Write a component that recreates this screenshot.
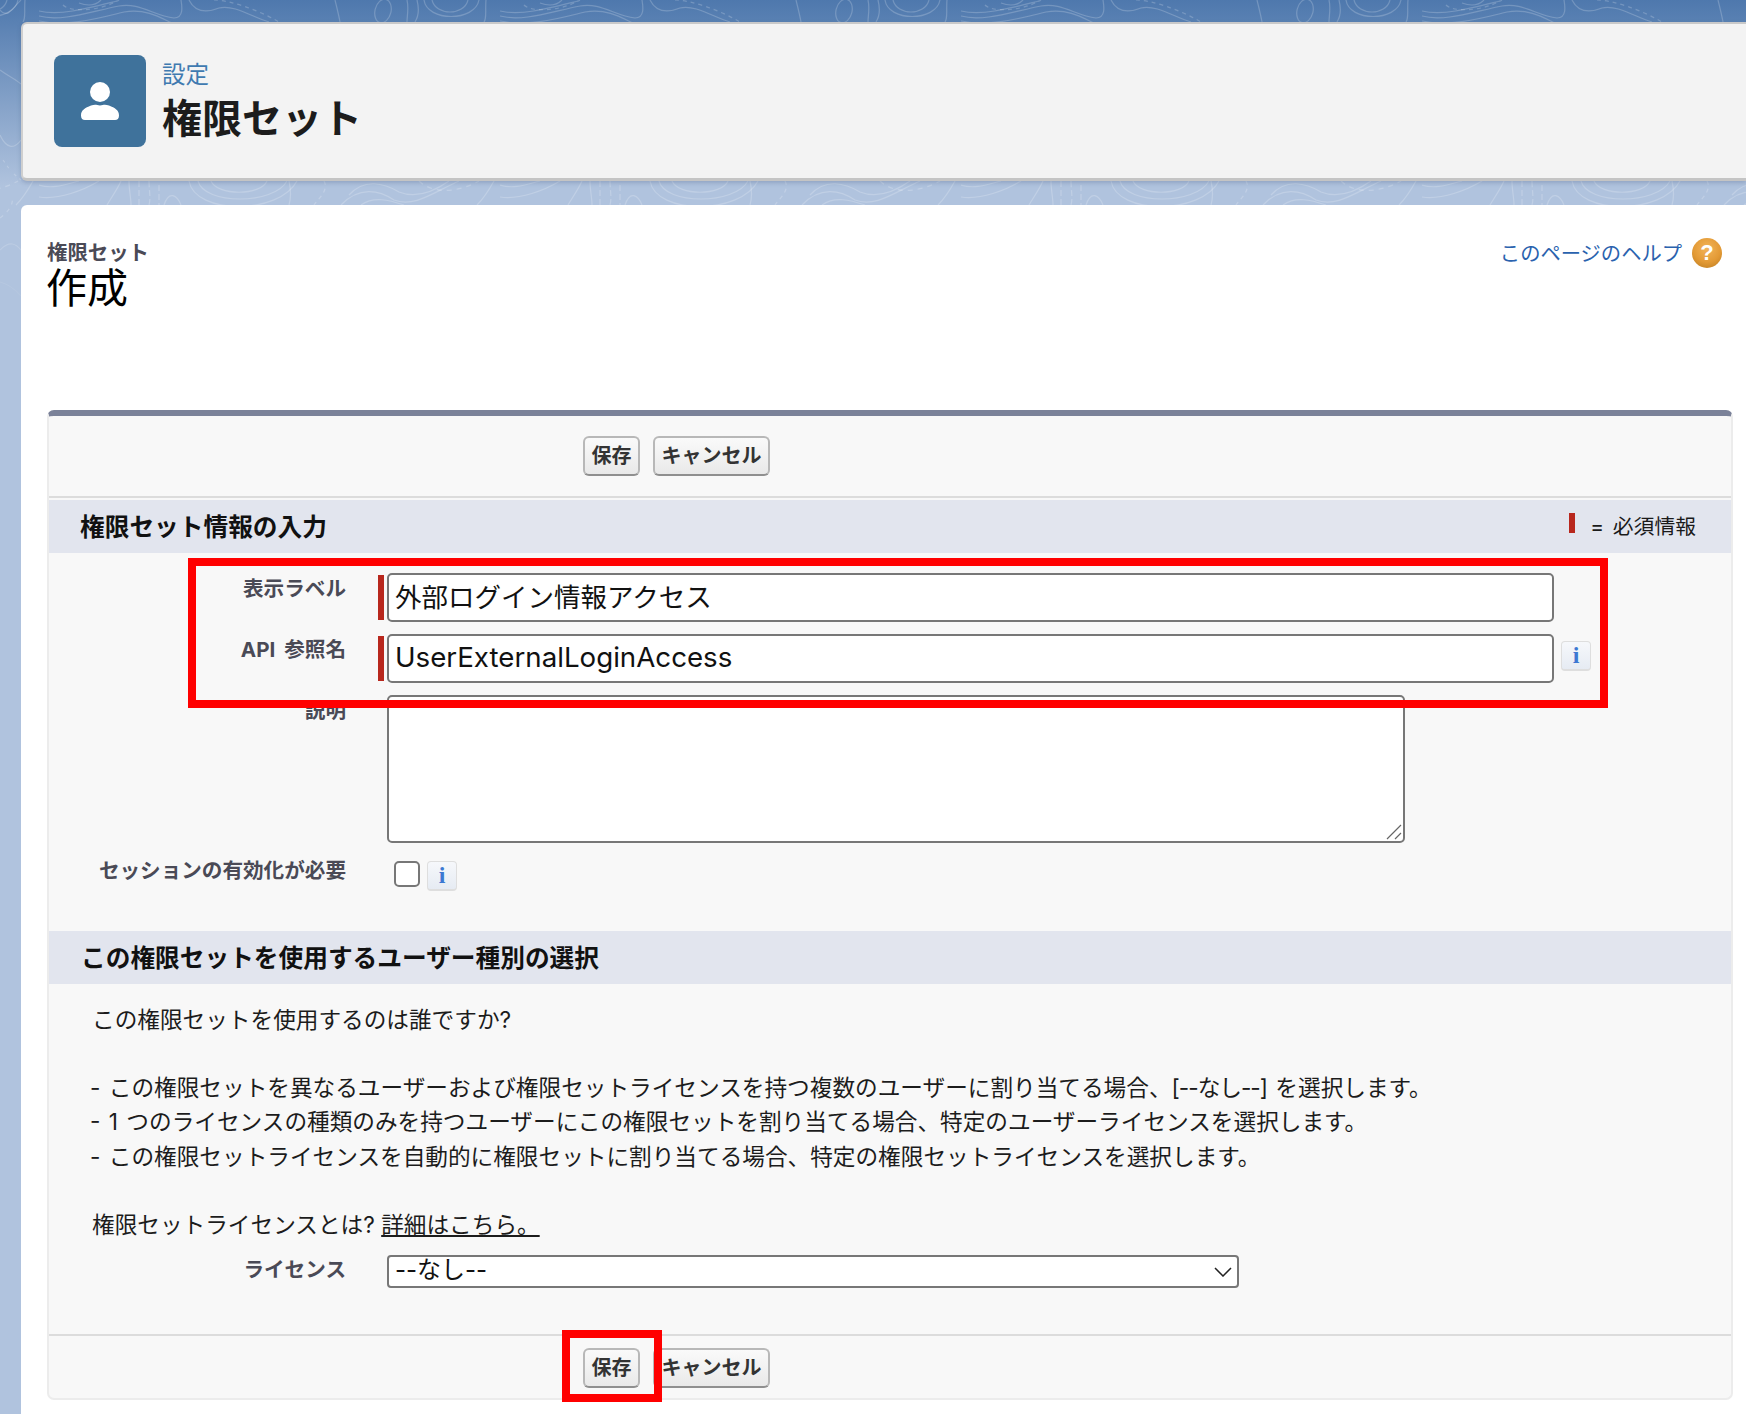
<script>
</script>

<div class="page">
  <svg class="bg" width="1746" height="320" aria-hidden="true">
    <defs>
      <pattern id="topo" width="461" height="320" patternUnits="userSpaceOnUse" patternTransform="translate(500 0)">
        <g fill="none" stroke="#fff" stroke-opacity=".2" stroke-width="1.2">
          <path d="M0 16C22 22 50 12 80 6C100 2 115 16 135 18C145 18 143 6 142 0"/>
          <path d="M0 11C22 16 50 8 78 1"/>
          <path d="M0 21C30 27 60 18 85 12C110 8 125 20 135 24"/>
          <path d="M150 0C155 10 165 14 180 8C195 4 215 18 230 22"/>
          <path d="M175 0C190 0 220 10 240 22" stroke-dasharray="4 4"/>
          <path d="M24 5C30 12 60 12 80 0" stroke-dasharray="4 4"/>
          <path d="M40 3C48 6 56 6 62 0"/>
          <ellipse cx="344" cy="11" rx="8" ry="12" transform="rotate(14 344 11)"/>
          <path d="M296 0C298 8 300 16 301 22"/>
          <path d="M368 0C370 8 368 16 368 22"/>
          <path d="M378 0C380 8 380 16 376 22"/>
          <path d="M393 0C397 16 425 16 429 0"/>
          <path d="M385 0C388 22 436 22 440 0"/>
          <path d="M447 0C446 10 448 18 445 22"/>
          <path d="M159 181C165 205 235 205 248 181"/>
          <path d="M150 181C156 215 240 215 258 181"/>
          <path d="M172 181C178 196 222 196 228 181"/>
          <path d="M82 181C78 190 72 198 68 205"/>
          <path d="M90 181C90 190 92 198 92 205"/>
          <path d="M100 181V205M110 181C110 190 112 198 110 205M120 185V205" stroke-dasharray="6 3"/>
          <path d="M125 205C130 190 138 195 142 205"/>
          <path d="M0 185C15 190 30 183 40 181"/>
          <path d="M0 197C20 200 45 190 60 181"/>
          <path d="M302 205C320 186 340 190 355 200C375 208 395 192 420 181"/>
          <path d="M322 205C335 196 350 200 365 205"/>
          <path d="M310 195C325 178 345 183 360 192C380 200 400 188 410 181"/>
          <path d="M380 181C395 195 420 192 440 181" stroke-dasharray="5 5"/>
          <path d="M285 181C290 190 280 198 275 205" stroke-dasharray="4 4"/>
          <path d="M250 181C252 190 252 198 250 205"/>
          <path d="M455 181C450 190 445 198 438 205"/>
        </g>
      </pattern>
      <linearGradient id="fade" x1="0" y1="0" x2="0" y2="1">
        <stop offset="0" stop-color="#fff"/>
        <stop offset=".7" stop-color="#fff"/>
        <stop offset="1" stop-color="#000"/>
      </linearGradient>
      <mask id="fadeMask"><rect width="1746" height="320" fill="url(#fade)"/></mask>
    </defs>
    <rect width="1746" height="320" fill="url(#topo)"/>
    <g fill="none" stroke="#fff" stroke-opacity=".2" stroke-width="1.2" mask="url(#fadeMask)">
      <path d="M0 10C8 20 14 6 21 0"/>
      <path d="M0 70C8 76 14 78 21 84"/>
      <path d="M0 135C6 148 14 150 21 140"/>
      <path d="M3 160L10 170M14 174L21 180" stroke-dasharray="3 4"/>
      <path d="M0 218C8 212 14 205 12 196" stroke-dasharray="4 5"/>
      <path d="M0 250C10 240 16 244 21 250"/>
      <path d="M0 282C8 284 14 288 21 296"/>
    </g>
  </svg>

  <header class="top">
    <div class="tile">
      <svg width="92" height="92" viewBox="0 0 92 92" aria-hidden="true">
        <circle cx="46" cy="37" r="10" fill="#fff"/>
        <path d="M27 60.5C27 55 31 53 37 50.500C40 49.500 42 49.500 46 50.500C50 49.500 52 49.500 55 50.500C61 53 65 55 65 60.500C65 63.500 63.500 65 61 65H31C28.500 65 27 63.500 27 60.500Z" fill="#fff"/>
      </svg>
    </div>
    <div class="titles">
      <div class="crumb">設定</div>
      <h1>権限セット</h1>
    </div>
  </header>

  <main class="card">
    <div class="head">
      <div class="names">
        <div class="kind">権限セット</div>
        <h2>作成</h2>
      </div>
      <div class="help">
        <span class="helptext">このページのヘルプ</span>
        <span class="helpicon">?</span>
      </div>
    </div>

    <section class="panel">
      <div class="buttons top-buttons">
        <button class="save">保存</button>
        <button>キャンセル</button>
      </div>

      <div class="bar first-bar">
        <h3>権限セット情報の入力</h3>
        <div class="legend"><i class="req legend-req"></i><span>= 必須情報</span></div>
      </div>

      <div class="fields">
        <div class="row">
          <div class="label">表示ラベル</div>
          <div class="field"><i class="req"></i><input class="text" value="外部ログイン情報アクセス" /></div>
        </div>
        <div class="row">
          <div class="label">API 参照名</div>
          <div class="field"><i class="req"></i><input class="text latin" value="UserExternalLoginAccess" /><span class="info api-info">i</span></div>
        </div>
        <div class="row">
          <div class="label">説明</div>
          <div class="field plain">
            <div class="areawrap">
              <textarea></textarea>
              <svg class="grip" width="16" height="16" viewBox="0 0 16 16" aria-hidden="true"><path d="M1 15L15 1M9 15l6-6" fill="none" stroke="#666" stroke-width="1.200"/></svg>
            </div>
          </div>
        </div>
        <div class="row">
          <div class="label">セッションの有効化が必要</div>
          <div class="field check"><input type="checkbox" /><span class="info">i</span></div>
        </div>
      </div>

      <div class="bar second-bar">
        <h3>この権限セットを使用するユーザー種別の選択</h3>
      </div>

      <div class="copy">
        <p class="lead">この権限セットを使用するのは誰ですか?</p>
        <ul>
          <li>- この権限セットを異なるユーザーおよび権限セットライセンスを持つ複数のユーザーに割り当てる場合、<span class="tight">[--なし--]</span> を選択します。</li>
          <li>- 1 つのライセンスの種類のみを持つユーザーにこの権限セットを割り当てる場合、特定のユーザーライセンスを選択します。</li>
          <li>- この権限セットライセンスを自動的に権限セットに割り当てる場合、特定の権限セットライセンスを選択します。</li>
        </ul>
        <p>権限セットライセンスとは? <u>詳細はこちら。</u></p>
      </div>

      <div class="row license">
        <div class="label">ライセンス</div>
        <div class="field plain">
          <div class="selectwrap">
            <select><option>--なし--</option></select>
            <svg class="chev" width="18" height="10" viewBox="0 0 18 10" aria-hidden="true"><path d="M1 1l8 8 8-8" fill="none" stroke="#222" stroke-width="1.500"/></svg>
          </div>
        </div>
      </div>

      <div class="buttons bottom-buttons">
        <button class="save">保存</button>
        <button>キャンセル</button>
      </div>
    </section>
  </main>

  <div class="mark mark-fields"></div>
  <div class="mark mark-save"></div>
</div>

<style>
  :global(body) {
    margin: 0;
    background: #fff;
  }
  .page {
    position: relative;
    width: 1746px;
    height: 1414px;
    overflow: hidden;
    background: linear-gradient(180deg, #4e78ad 0, #b0c3de 186px, #b0c3de 100%);
    font-family: Inter, "Noto Sans CJK JP", sans-serif;
    color: #1a1a1a;
  }
  .bg {
    position: absolute;
    left: 0;
    top: 0;
  }
  .top {
    position: relative;
    display: flex;
    align-items: center;
    gap: 16px;
    height: 154px;
    margin: 22px 0 0 21px;
    padding-left: 31px;
    background: #f3f3f3;
    border-top: 2px solid #c9c9c9;
    border-bottom: 3px solid #c4c4c4;
    border-left: 2px solid #cfcfcf;
    border-radius: 6px 0 0 6px;
    box-shadow: 0 2px 4px rgba(60, 80, 120, .25);
    box-sizing: content-box;
  }
  .tile {
    width: 92px;
    height: 92px;
    border-radius: 8px;
    background: #3f729b;
  }
  .tile svg { display: block; }
  .crumb {
    font-size: 23.500px;
    line-height: 30px;
    color: #3f7ab0;
  }
  h1 {
    margin: 5px 0 0;
    font-size: 40px;
    line-height: 48px;
    font-weight: 700;
    color: #1c1c1c;
  }
  .card {
    position: relative;
    height: 1209px;
    margin: 24px 0 0 21px;
    padding: 0 13px 0 26px;
    background: #fff;
    border-radius: 6px 0 0 0;
    box-sizing: border-box;
  }
  .head {
    display: flex;
    justify-content: space-between;
    height: 205px;
  }
  .kind {
    margin-top: 34px;
    font-size: 20.400px;
    line-height: 28px;
    font-weight: 700;
    color: #4a4a56;
  }
  h2 {
    margin: -1px 0 0 -1px;
    font-size: 41px;
    line-height: 45px;
    font-weight: 400;
    color: #000;
  }
  .help {
    display: flex;
    align-items: flex-start;
    gap: 10px;
    margin-top: 33px;
    margin-right: 11px;
  }
  .helptext {
    margin-top: 1px;
    font-size: 20.300px;
    line-height: 30px;
    color: #2a62ae;
  }
  .helpicon {
    width: 30px;
    height: 30px;
    border-radius: 50%;
    background: radial-gradient(circle at 50% 35%, #f2b45a 0, #e39a35 55%, #b8791f 100%);
    color: #fff;
    font-family: "Liberation Sans", sans-serif;
    font-size: 22px;
    font-weight: 700;
    line-height: 30px;
    text-align: center;
  }
  .panel {
    height: 990px;
    background: #f8f8f8;
    border: 2px solid #ececec;
    border-top: 6px solid #7b8299;
    border-radius: 7px;
    box-sizing: border-box;
  }
  .buttons {
    display: flex;
    gap: 13px;
    padding-left: 534px;
    box-sizing: border-box;
  }
  .top-buttons {
    height: 82px;
    padding-top: 20px;
    border-bottom: 2px solid #dcdcdc;
  }
  .bottom-buttons {
    margin-top: 46px;
    height: 65px;
    padding-top: 12px;
    border-top: 2px solid #dcdcdc;
  }
  button {
    height: 40px;
    width: 117px;
    padding: 0;
    font: 700 20px/36px Inter, "Noto Sans CJK JP", sans-serif;
    color: #333;
    background: linear-gradient(180deg, #fafafa, #e9e9e9);
    border: 2px solid #b8b8b8;
    border-bottom-color: #8f8f8f;
    border-radius: 6px;
  }
  button.save { width: 57px; }
  .bar {
    display: flex;
    align-items: center;
    justify-content: space-between;
    background: #e2e5ee;
    box-sizing: border-box;
  }
  .first-bar {
    height: 53px;
    margin-top: 2px;
    padding: 0 30px 0 31px;
  }
  .second-bar {
    height: 53px;
    margin-top: 2px;
    padding-left: 32px;
  }
  h3 {
    margin: 0;
    font-size: 24.700px;
    line-height: 34px;
    font-weight: 700;
    color: #111;
  }
  .legend {
    display: flex;
    align-items: center;
    gap: 15px;
    margin-right: 5px;
    font-size: 20.800px;
    line-height: 28px;
    word-spacing: 3px;
  }
  .legend-req {
    width: 6px !important;
    height: 20px !important;
    margin-top: -7px;
  }
  .req {
    display: block;
    flex: none;
    width: 6px;
    height: 45px;
    background: #b8271d;
  }
  .fields {
    padding-top: 20px;
    height: 376px;
    box-sizing: border-box;
  }
  .fields .label { padding-top: 1px; }
  .row {
    display: grid;
    grid-template-columns: 297px 1fr;
    column-gap: 32px;
    margin-bottom: 12px;
  }
  .label {
    font-size: 20.600px;
    line-height: 30px;
    font-weight: 700;
    color: #4a4a56;
    text-align: right;
    word-spacing: 4px;
  }
  .field {
    display: flex;
    align-items: center;
    gap: 3px;
  }
  .plain { padding-left: 9px; }
  .text {
    width: 1167px;
    height: 49px;
    padding: 0 6px 4px;
    font: 400 26.500px/40px Inter, "Noto Sans CJK JP", sans-serif;
    color: #111;
    background: #fff;
    border: 2px solid #777;
    border-radius: 5px;
    box-sizing: border-box;
  }
  .latin {
    font-size: 27.700px;
  }
  .api-info { margin: -6px 0 0 4px; }
  .areawrap {
    position: relative;
    width: 1018px;
  }
  textarea {
    display: block;
    width: 100%;
    height: 148px;
    resize: none;
    background: #fff;
    border: 2px solid #777;
    border-radius: 5px;
    box-sizing: border-box;
  }
  .grip {
    position: absolute;
    right: 3px;
    bottom: 3px;
  }
  .check {
    padding: 6px 0 0 16px;
    align-items: flex-start;
    gap: 7px;
  }
  input[type="checkbox"] {
    appearance: none;
    width: 26px;
    height: 26px;
    margin: 0;
    background: #fff;
    border: 2px solid #777;
    border-radius: 5px;
    box-sizing: border-box;
  }
  .info {
    display: block;
    width: 30px;
    height: 30px;
    background: linear-gradient(180deg, #f6f8fb, #e6ebf3);
    border: 1.500px solid #dedede;
    border-bottom-width: 2px;
    border-radius: 4px;
    color: #3c78d2;
    font: 700 24px/27px "Liberation Serif", serif;
    text-align: center;
    box-sizing: border-box;
  }
  .copy {
    padding: 19px 0 0 43px;
    font-size: 22.650px;
    line-height: 34.200px;
    color: #1c1c1c;
  }
  .copy p { margin: 0; }
  ul {
    list-style: none;
    margin: 34px 0 34px -2px;
    padding: 0;
    word-spacing: 2px;
  }
  .tight { letter-spacing: -1px; }
  .license {
    margin: 13px 0 0;
  }
  .selectwrap {
    position: relative;
    width: 852px;
  }
  select {
    display: block;
    width: 100%;
    height: 33px;
    padding: 0 6px 3px;
    appearance: none;
    font: 400 24px/26px Inter, "Noto Sans CJK JP", sans-serif;
    color: #111;
    background: #fff;
    border: 2px solid #777;
    border-radius: 4px;
    box-sizing: border-box;
  }
  .chev {
    position: absolute;
    right: 7px;
    top: 12px;
  }
  .mark {
    position: absolute;
    border: 8px solid #f00;
    box-sizing: border-box;
  }
  .mark-fields {
    left: 188px;
    top: 558px;
    width: 1420px;
    height: 150px;
  }
  .mark-save {
    left: 562px;
    top: 1330px;
    width: 100px;
    height: 72px;
  }
</style>
